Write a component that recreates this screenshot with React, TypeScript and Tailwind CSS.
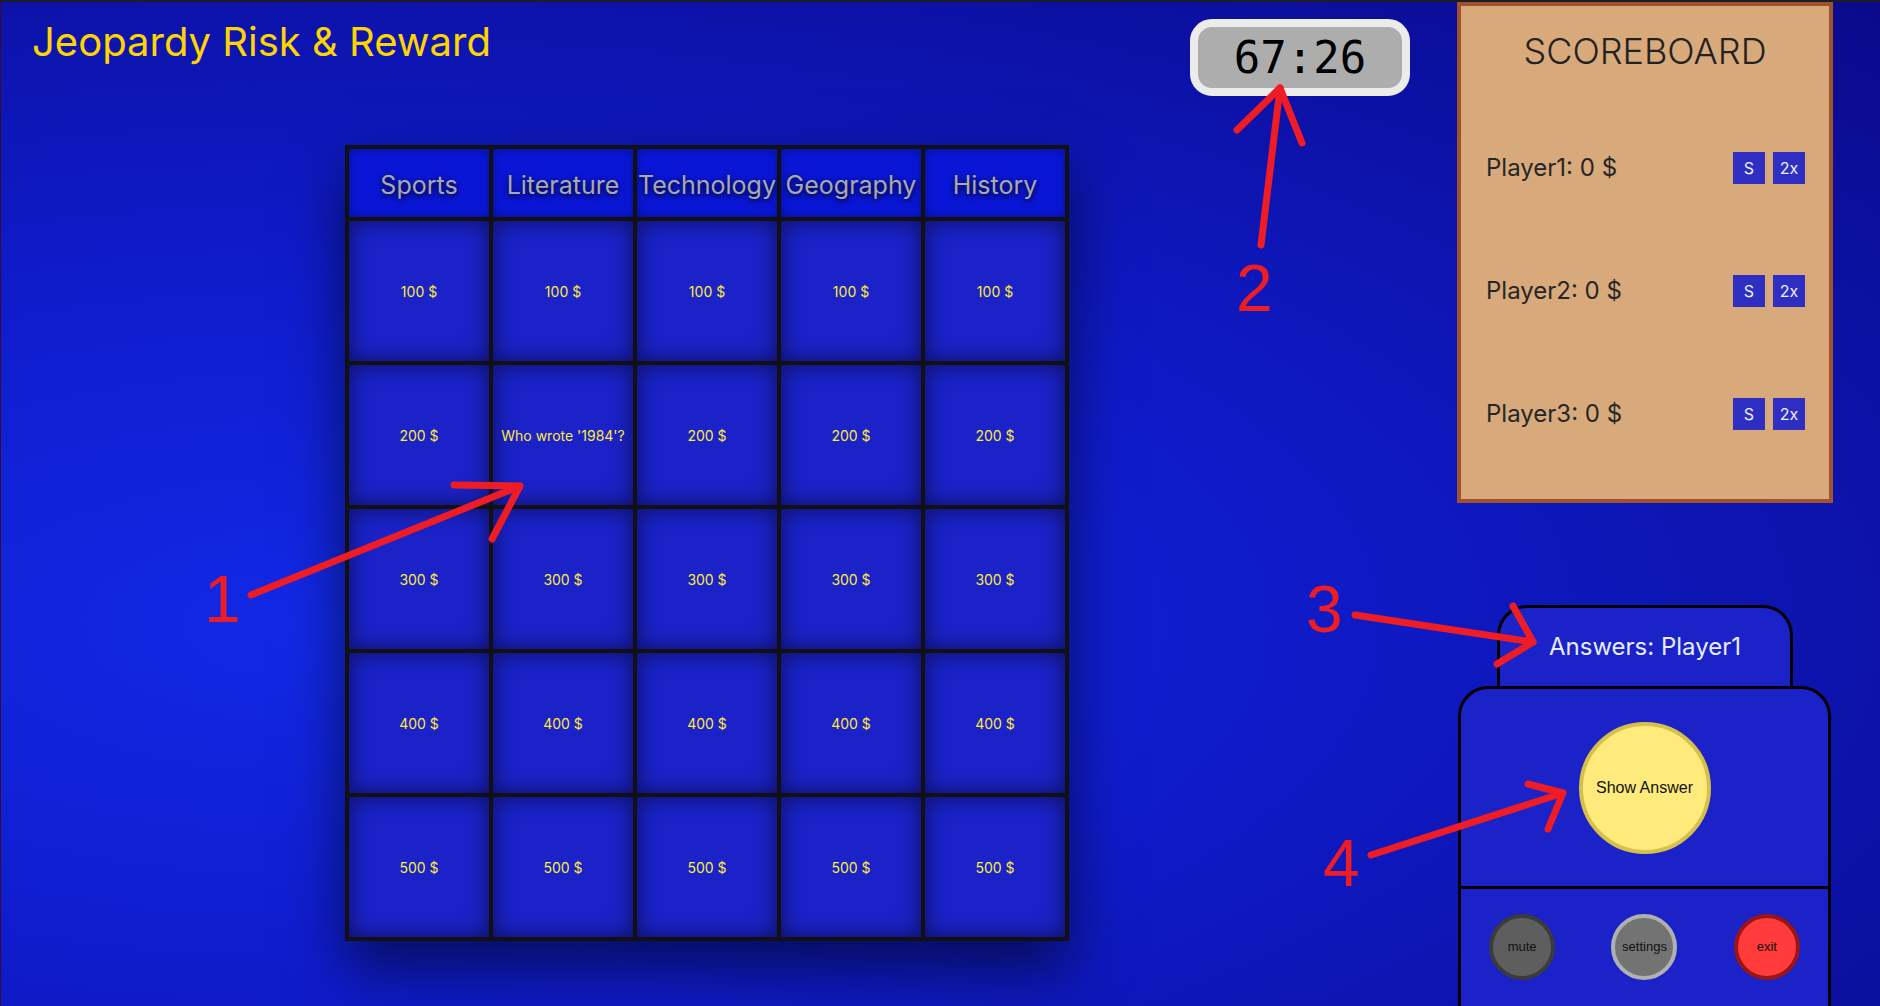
import React from "react";

const categories = ["Sports", "Literature", "Technology", "Geography", "History"];
const values = [100, 200, 300, 400, 500];

/* ---------------- BOARD ---------------- */

function Board() {
  return (
    <div className="ml-[344px] mt-[79px] grid w-fit grid-cols-[repeat(5,140px)] grid-rows-[68px_repeat(5,140px)] gap-[4px] bg-[#111111] p-[4px] shadow-[0_28px_55px_rgba(0,0,0,0.55)]">
      {categories.map((c) => (
        <div
          key={c}
          className="flex items-center justify-center whitespace-nowrap bg-[#0a16d6] pt-[5px] text-[25px] text-[#a9a9a9] shadow-[inset_0_0_8px_rgba(0,0,0,0.35)] [text-shadow:0_2px_6px_#000]"
        >
          {c}
        </div>
      ))}

      {values.map((v) =>
        categories.map((c) => (
          <div
            key={c + v}
            className="flex items-center justify-center bg-[#1a22c8] text-[14px] text-[#ffeb3b] shadow-[inset_0_0_22px_rgba(0,0,0,0.55)]"
          >
            {c === "Literature" && v === 200 ? "Who wrote '1984'?" : `${v} $`}
          </div>
        ))
      )}
    </div>
  );
}

/* ---------------- SCOREBOARD ---------------- */

function Scoreboard() {
  const players = ["Player1", "Player2", "Player3"];

  return (
    <div className="h-[501px] border-4 border-[#a0522d] bg-[#d8aa7b]">
      <h2 className="pt-[23px] text-center text-[36px] font-light leading-[44px] text-[#222222]">
        SCOREBOARD
      </h2>

      <div className="mt-[79px] flex flex-col gap-[91px] pl-[25px] pr-[24px]">
        {players.map((p) => (
          <div key={p} className="flex h-8 items-center justify-between">
            <span className="text-[24px] text-[#262626]">{p}: 0 $</span>
            <div className="flex gap-2">
              <button className="flex h-8 w-8 items-center justify-center bg-[#2e2ec2] text-[16px] text-[#f0f0ff]">
                S
              </button>
              <button className="flex h-8 w-8 items-center justify-center bg-[#2e2ec2] text-[16px] text-[#f0f0ff]">
                2x
              </button>
            </div>
          </div>
        ))}
      </div>
    </div>
  );
}

/* ---------------- ANSWER PANEL ---------------- */

function AnswerPanel() {
  return (
    <div>
      <div className="ml-[40px] mt-[102px] flex h-[81px] w-[296px] items-center justify-center rounded-t-[30px] border-[3px] border-b-0 border-black bg-[#1a22c8] text-[24px] text-[#e8ecff]">
        Answers: Player1
      </div>

      <div className="ml-px h-[400px] w-[373px] rounded-t-[30px] border-[3px] border-black bg-[#1a22c8]">
        <div className="flex h-[197px] items-center justify-center">
          <button className="flex h-[132px] w-[132px] items-center justify-center rounded-full border-4 border-[#d6c04a] bg-[#ffeb7b] font-['Liberation_Sans',Arial,sans-serif] text-[16px] text-[#111]">
            Show Answer
          </button>
        </div>

        <div className="flex h-[118px] items-center justify-around border-t-[3px] border-black font-['Liberation_Sans',Arial,sans-serif] text-[13px] text-[#111]">
          <button className="flex h-[66px] w-[66px] items-center justify-center rounded-full border-4 border-[#3b3b3b] bg-[#5e5e5e]">
            mute
          </button>
          <button className="flex h-[66px] w-[66px] items-center justify-center rounded-full border-4 border-[#b0b0b0] bg-[#737373]">
            settings
          </button>
          <button className="flex h-[66px] w-[66px] items-center justify-center rounded-full border-4 border-[#9c1414] bg-[#ff3b3b]">
            exit
          </button>
        </div>
      </div>
    </div>
  );
}

/* ---------------- ANNOTATIONS ---------------- */

function Annotations() {
  const arrows = [
    { tail: [250, 593], tip: [519, 484], a: [453, 483], b: [491, 537] },
    { tail: [1260, 243], tip: [1279, 86], a: [1236, 128], b: [1301, 141] },
    { tail: [1354, 613], tip: [1532, 640], a: [1512, 604], b: [1496, 662] },
    { tail: [1370, 853], tip: [1562, 791], a: [1527, 782], b: [1547, 827] },
  ];
  const labels = [
    { t: "1", x: 203, y: 620 },
    { t: "2", x: 1235, y: 309 },
    { t: "3", x: 1305, y: 630 },
    { t: "4", x: 1322, y: 884 },
  ];

  return (
    <svg className="pointer-events-none absolute left-0 top-0" width="1880" height="1006">
      {arrows.map((ar, i) => (
        <g key={i} stroke="#ee1c25" strokeWidth="7" strokeLinecap="round" strokeLinejoin="round" fill="none">
          <line x1={ar.tail[0]} y1={ar.tail[1]} x2={ar.tip[0]} y2={ar.tip[1]} />
          <polyline points={`${ar.a[0]},${ar.a[1]} ${ar.tip[0]},${ar.tip[1]} ${ar.b[0]},${ar.b[1]}`} />
        </g>
      ))}
      {labels.map((l) => (
        <text
          key={l.t}
          x={l.x}
          y={l.y}
          fill="#ee1c25"
          fontSize="66"
          fontFamily="'Liberation Sans', Arial, sans-serif"
        >
          {l.t}
        </text>
      ))}
    </svg>
  );
}

export default function App() {
  return (
    <div className="relative flex h-[1006px] w-[1880px] overflow-hidden border-l border-t-2 border-l-[#3a0b2a] border-t-[#1c1c24] bg-[radial-gradient(ellipse_at_18%_62%,#1229e6_0%,#0f1ccc_40%,#0a0a8a_100%)] font-['Inter','Noto_Sans',sans-serif]">
      {/* ----- Left: title + board ----- */}
      <div className="w-[1189px]">
        <h1 className="ml-[31px] pt-[16px] text-[40px] leading-[48px] text-[#ffd500]">
          Jeopardy Risk &amp; Reward
        </h1>
        <Board />
      </div>

      {/* ----- Timer ----- */}
      <div className="w-[220px] pt-[17px]">
        <div className="flex h-[77px] items-center justify-center rounded-[22px] border-[8px] border-[#ececec] bg-[#adadad] font-['DejaVu_Sans_Mono',monospace] text-[44px] text-black">
          67:26
        </div>
      </div>

      {/* ----- Right column ----- */}
      <div className="ml-[47px] w-[376px]">
        <Scoreboard />
        <AnswerPanel />
      </div>

      <Annotations />
    </div>
  );
}
